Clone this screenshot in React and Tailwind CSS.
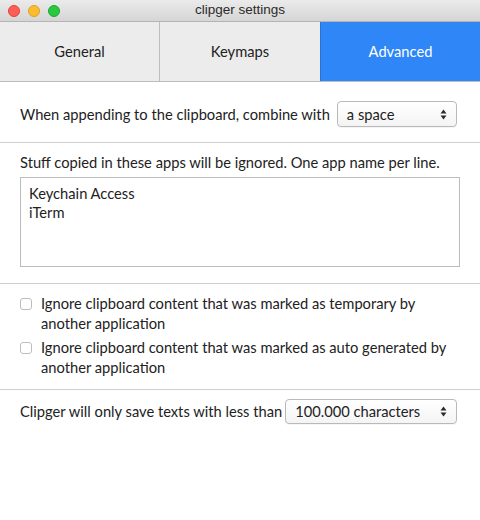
import React from "react";

function Arrows() {
  return (
    <svg width="7" height="11" viewBox="0 0 7 11" className="shrink-0">
      <path d="M3.5 0.5 L6.5 4.5 L0.5 4.5 Z" fill="#2b2b2b" />
      <path d="M3.5 10.5 L6.5 6.5 L0.5 6.5 Z" fill="#2b2b2b" />
    </svg>
  );
}

function Select({ label, className }) {
  return (
    <div
      className={
        "flex items-center justify-between rounded-[4px] border border-[#b9b9b9] bg-gradient-to-b from-white to-[#f4f4f4] pl-[9px] pr-[9px] shadow-[0_1px_0_rgba(0,0,0,0.04)] " +
        className
      }
    >
      <span className="text-[14.7px] text-[#222]">{label}</span>
      <Arrows />
    </div>
  );
}

function Check({ children }) {
  return (
    <div className="flex items-start gap-[9px]">
      <div className="mt-[5px] w-[12px] h-[12px] rounded-[3px] border border-[#bdbdbd] bg-white shrink-0" />
      <div className="text-[14.7px] leading-[20px] text-[#222]">{children}</div>
    </div>
  );
}

export default function App() {
  return (
    <div
      className="w-[480px] h-[520px] bg-white flex flex-col overflow-hidden"
      style={{ fontFamily: "Lato, 'Open Sans', sans-serif" }}
    >
      {/* title bar */}
      <div className="relative h-[22px] shrink-0 bg-gradient-to-b from-[#ebebeb] to-[#d5d5d5] border-b border-[#b4b4b4] flex items-center justify-center">
        <div className="absolute left-[8px] top-[5px] flex gap-[8px]">
          <div className="w-[12px] h-[12px] rounded-full bg-[#fc5f57] border border-[#e0443e]" />
          <div className="w-[12px] h-[12px] rounded-full bg-[#fdbc2e] border border-[#dea123]" />
          <div className="w-[12px] h-[12px] rounded-full bg-[#28c840] border border-[#1aab29]" />
        </div>
        <span
          className="text-[13.5px] text-[#2a2a2a]"
          style={{ fontFamily: "'Liberation Sans', Arial, sans-serif" }}
        >
          clipger settings
        </span>
      </div>

      {/* tabs */}
      <div className="h-[60px] shrink-0 flex border-b border-[#bdbdbd]">
        <div className="w-[160px] flex items-center justify-center bg-[#ececec] border-r border-[#bdbdbd] text-[14.7px] text-[#222]">
          General
        </div>
        <div className="w-[160px] flex items-center justify-center bg-[#ececec] text-[14.7px] text-[#222]">
          Keymaps
        </div>
        <div className="flex-1 flex items-center justify-center bg-[#2f86f6] border-l border-[#2a72d8] text-[14.7px] text-white">
          Advanced
        </div>
      </div>

      {/* section 1 */}
      <div className="flex items-center pl-[20px] pr-[23px] pt-[19px] pb-[15px] border-b border-[#cfcfcf]">
        <span className="text-[14.7px] text-[#222] whitespace-nowrap">
          When appending to the clipboard, combine with
        </span>
        <Select label="a space" className="ml-[7px] flex-1 h-[26px]" />
      </div>

      {/* section 2 */}
      <div className="pl-[20px] pr-[20px] pt-[9px] pb-[16px] border-b border-[#cfcfcf]">
        <div className="text-[14.7px] leading-[20px] text-[#222]">
          Stuff copied in these apps will be ignored. One app name per line.
        </div>
        <div className="mt-[5px] h-[90px] border border-[#bdbdbd] px-[8px] pt-[6px] text-[14.7px] leading-[19px] text-[#222]">
          <div>Keychain Access</div>
          <div>iTerm</div>
        </div>
      </div>

      {/* section 3 */}
      <div className="pl-[20px] pr-[20px] pt-[9px] pb-[12px] border-b border-[#cfcfcf] flex flex-col gap-[4px]">
        <Check>
          Ignore clipboard content that was marked as temporary by
          <br />
          another application
        </Check>
        <Check>
          Ignore clipboard content that was marked as auto generated by
          <br />
          another application
        </Check>
      </div>

      {/* section 4 */}
      <div className="flex items-center pl-[20px] pr-[23px] pt-[9px]">
        <span className="text-[14.7px] text-[#222] whitespace-nowrap">
          Clipger will only save texts with less than
        </span>
        <Select label="100.000 characters" className="ml-[3px] flex-1 h-[25px]" />
      </div>
    </div>
  );
}
